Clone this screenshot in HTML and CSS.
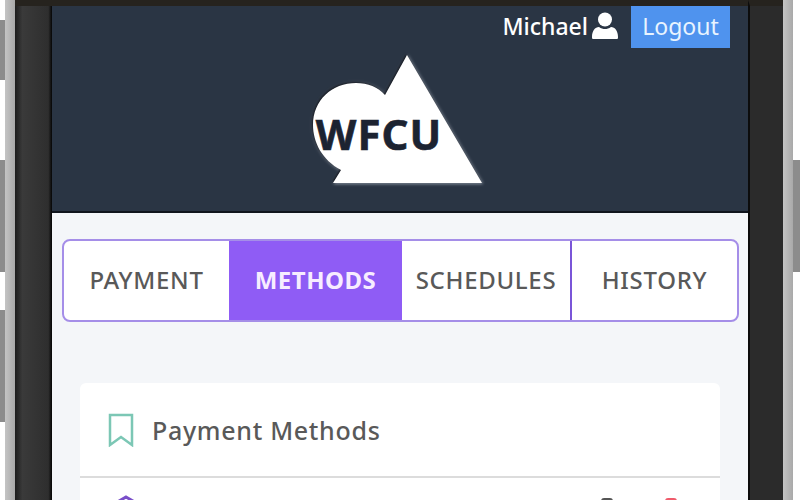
FILE: index.html
```html
<!DOCTYPE html>
<html lang="en">
<head>
    <meta charset="UTF-8">
    <title>WFCU Payment Methods</title>
    <link rel="stylesheet" href="styles.css">
</head>
<body>
    <div class="phone">
        <div class="edge edge-left">
            <div class="side-key key-a"></div>
            <div class="side-key key-b"></div>
            <div class="side-key key-c"></div>
        </div>
        <div class="rim"></div>
        <div class="bezel bezel-left"></div>
        <div class="screen">
            <header class="app-header">
                <div class="user-bar">
                    <span class="user-name">Michael</span>
                    <svg class="user-icon" viewBox="0 0 26 28">
                        <circle cx="13" cy="7.5" r="7" fill="#fff"/>
                        <path d="M1 27c-1 0-1-1-1-2 0-6 3-10 7-10 2 1.500 4 2 6 2s4-.5 6-2c4 0 7 4 7 10 0 1 0 2-1 2z" fill="#fff"/>
                    </svg>
                    <button class="logout-btn">Logout</button>
                </div>
                <div class="logo-row">
                    <svg class="logo" viewBox="305 48 186 146">
                        <path class="logo-shape" d="M407 55L482 183H333L341 170C322 160 313 142 313 125C313 100 332 83 356 83C368 83 378 87 385 95Z"/>
                        <text class="logo-text" x="379" y="150" text-anchor="middle">WFCU</text>
                    </svg>
                </div>
            </header>
            <main class="content">
                <nav class="tabs">
                    <div class="tab">PAYMENT</div>
                    <div class="tab active">METHODS</div>
                    <div class="tab">SCHEDULES</div>
                    <div class="tab tab-last">HISTORY</div>
                </nav>
                <section class="card">
                    <div class="card-header">
                        <svg class="bookmark" viewBox="0 0 26 34">
                            <path d="M2 2H24V32L13 24L2 32Z"/>
                        </svg>
                        <h2 class="card-title">Payment Methods</h2>
                    </div>
                    <div class="card-row">
                        <svg class="row-icon" viewBox="0 0 28 30">
                            <path d="M14 2L26 9V22L14 29L2 22V9Z"/>
                        </svg>
                        <span class="row-action action-edit"></span>
                        <span class="row-action action-delete"></span>
                    </div>
                </section>
            </main>
        </div>
        <div class="bezel bezel-right"></div>
        <div class="rim"></div>
        <div class="edge edge-right">
            <div class="side-key key-b"></div>
        </div>
    </div>
</body>
</html>
```

FILE: styles.css
```css
html, body {
    margin: 0;
    padding: 0;
    height: 500px;
    overflow: hidden;
    background-color: #fff;
    font-family: "Noto Sans", Arial, sans-serif;
}
.phone {
    display: flex;
    height: 500px;
}

/* phone body */
.edge {
    display: flex;
    flex-direction: column;
}
.edge-left {
    width: 5px;
}
.edge-right {
    width: 7px;
}
.side-key {
    background-color: #8c8c8c;
}
.key-a {
    height: 60px;
    margin-top: 20px;
}
.key-b {
    height: 112px;
    margin-top: 160px;
}
.key-c {
    height: 112px;
    margin-top: 38px;
}
.edge-left .key-b {
    margin-top: 80px;
}
.rim {
    width: 10px;
    background: linear-gradient(90deg, #c4c4c4, #a9a9a9);
}
.bezel {
    background-color: #2b2b2b;
    border-top: 6px solid #26231e;
    box-sizing: border-box;
}
.bezel-left {
    width: 37px;
    background: linear-gradient(90deg, #1d1d1d, #3a3a3a 20%, #2e2e2e 90%, #050505);
}
.bezel-right {
    width: 35px;
    border-left: 2px solid #0c0c0c;
}
.screen {
    flex: 1;
    border-top: 6px solid #26231e;
    background-color: #f4f6f9;
    overflow: hidden;
}

/* header */
.app-header {
    height: 207px;
    box-sizing: border-box;
    background-color: #2a3544;
    border-bottom: 2px solid #10151d;
}
.user-bar {
    display: flex;
    justify-content: flex-end;
    align-items: center;
    padding-right: 18px;
    height: 42px;
}
.user-name {
    color: #fff;
    font-size: 23px;
    font-weight: 500;
    padding-bottom: 2px;
}
.user-icon {
    width: 26px;
    height: 28px;
    margin: 0 13px 3px 4px;
}
.logout-btn {
    width: 99px;
    height: 42px;
    padding: 0 0 3px;
    background-color: #4f93ee;
    color: #e8f4ff;
    font-family: inherit;
    font-size: 23px;
    border: none;
}
.logo-row {
    display: flex;
    justify-content: center;
    padding-right: 4px;
}
.logo {
    width: 186px;
    height: 146px;
}
.logo-shape {
    fill: #fff;
    filter: drop-shadow(-1px -1px 1px #0c1018) drop-shadow(1.5px 1.5px 1.5px #8d96a3);
}
.logo-text {
    font-size: 42px;
    font-weight: 700;
    letter-spacing: 1px;
    fill: #1c2331;
    stroke: #1c2331;
    stroke-width: .6px;
}

/* tabs */
.content {
    padding: 26px 9px 0 10px;
}
.tabs {
    display: grid;
    grid-template-columns: 165px 173px 168px 167px;
    height: 79px;
    background-color: #fff;
    border: 2px solid #a58ee8;
    border-radius: 8px;
    overflow: hidden;
}
.tab {
    display: flex;
    align-items: center;
    justify-content: center;
    padding-bottom: 3px;
    color: #595959;
    font-size: 24px;
    font-weight: 500;
    letter-spacing: .7px;
}
.tab.active {
    background-color: #8f5cf5;
    color: #f7edff;
    font-weight: 700;
    letter-spacing: .5px;
}
.tab-last {
    border-left: 2px solid #7a55d8;
}

/* card */
.card {
    margin: 61px 19px 0 18px;
    background-color: #fff;
    border-radius: 6px 6px 0 0;
}
.card-header {
    display: flex;
    align-items: center;
    gap: 18px;
    height: 93px;
    padding-left: 28px;
    border-bottom: 2px solid #dcdcdc;
}
.bookmark {
    width: 26px;
    height: 34px;
    fill: none;
    stroke: #7cc7b5;
    stroke-width: 2.5px;
}
.card-title {
    margin: 0;
    color: #595959;
    font-size: 25px;
    font-weight: 500;
    letter-spacing: .7px;
}
.card-row {
    display: flex;
    align-items: flex-start;
    height: 60px;
    padding-top: 17px;
}
.row-icon {
    width: 28px;
    height: 30px;
    margin-left: 32px;
    fill: none;
    stroke: #7a4fc9;
    stroke-width: 3px;
}
.row-action {
    width: 12px;
    height: 12px;
    margin-top: 3px;
    border-radius: 3px;
}
.action-edit {
    margin-left: 461px;
    background-color: #555;
}
.action-delete {
    margin-left: 52px;
    background-color: #ef5b6b;
}
```
